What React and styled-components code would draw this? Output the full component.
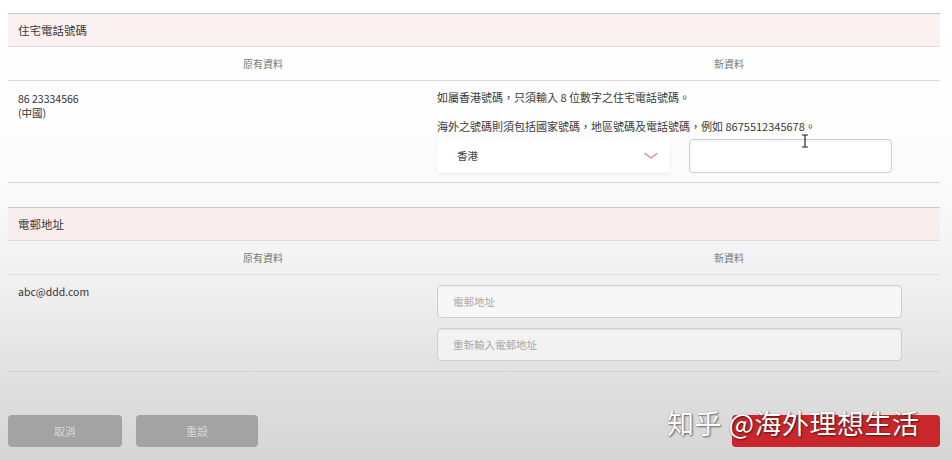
import React from 'react';
import styled, { createGlobalStyle } from 'styled-components';

const GlobalStyle = createGlobalStyle`
  html, body {
    margin: 0;
    padding: 0;
  }
  body {
    width: 952px;
    height: 460px;
    overflow: hidden;
    font-family: "Noto Sans CJK TC", "Liberation Sans", sans-serif;
    background: linear-gradient(180deg, #ffffff 0%, #fbfbfb 40%, #eeeeee 65%, #dedede 85%, #d6d6d6 100%);
    color: #333;
  }
`;

const Page = styled.div`
  position: relative;
  padding: 13px 12px 0 8px;
  height: 447px;
  display: flex;
  flex-direction: column;
`;

const Section = styled.section`
  border-top: 1px solid #c8c8c8;
  margin-bottom: ${(p) => p.$gap || 0}px;
`;

const SectionHead = styled.div`
  height: 32px;
  display: flex;
  align-items: center;
  padding-left: 10px;
  background: rgba(250, 232, 232, 0.6);
  border-bottom: 1px solid #dcdcdc;
  font-size: 11.5px;
  color: #3a3a3a;
`;

const ColHead = styled.div`
  height: 33px;
  display: grid;
  grid-template-columns: 510px 1fr;
  align-items: center;
  border-bottom: 1px solid #dcdcdc;
  font-size: 10px;
  color: #777;
  text-align: center;
`;

const DataRow = styled.div`
  display: grid;
  grid-template-columns: 429px 1fr;
  height: ${(p) => p.$h}px;
  border-bottom: 1px solid #d4d4d4;
  box-sizing: border-box;
  padding-top: ${(p) => p.$pt}px;
`;

const OldValue = styled.div`
  padding-left: 10px;
  padding-top: ${(p) => p.$pt || 0}px;
  font-size: 10.5px;
  line-height: 14px;
  color: #333;
`;

const NewCol = styled.div`
  display: flex;
  flex-direction: column;
`;

const Note = styled.p`
  margin: 0 0 ${(p) => p.$mb}px;
  font-size: 11px;
  line-height: 14px;
  color: #3a3a3a;
`;

const PhoneLine = styled.div`
  display: flex;
  align-items: center;
  gap: 19px;
  margin-top: 5px;
`;

const Select = styled.div`
  width: 233px;
  height: 35px;
  box-sizing: border-box;
  display: flex;
  align-items: center;
  justify-content: space-between;
  padding: 0 12px 0 20px;
  background: #fff;
  border-radius: 3px;
  box-shadow: 0 1px 3px rgba(0, 0, 0, 0.08);
  font-size: 10.5px;
  color: #444;
`;

const TextBox = styled.div`
  position: relative;
  width: ${(p) => p.$w}px;
  height: ${(p) => p.$h}px;
  box-sizing: border-box;
  border: 1.5px solid #cfcfcf;
  border-radius: 4px;
  background: ${(p) => p.$bg || '#fff'};
  box-shadow: inset 0 1px 2px rgba(0, 0, 0, 0.06);
  display: flex;
  align-items: center;
  padding-left: 15px;
  font-size: 10.5px;
  color: #a8a8a8;
  margin-bottom: ${(p) => p.$mb || 0}px;
`;

const Cursor = styled.svg`
  position: absolute;
  left: 111px;
  top: -6px;
`;

const Buttons = styled.div`
  margin-top: 43px;
  display: flex;
  align-items: center;
  gap: 14px;
`;

const Btn = styled.button`
  width: ${(p) => p.$w}px;
  height: 32px;
  border: none;
  border-radius: 4px;
  background: ${(p) => (p.$red ? '#c9272b' : '#a3a3a3')};
  color: #d8d8d8;
  font-family: inherit;
  font-size: 11px;
  margin-left: ${(p) => p.$ml || 0}px;
`;

const Watermark = styled.div`
  position: absolute;
  left: 667px;
  top: 403px;
  font-size: 27px;
  color: #fff;
  letter-spacing: 0.5px;
  text-shadow: 1px 1px 2px rgba(0, 0, 0, 0.55), 0 0 1px rgba(0, 0, 0, 0.4);
  font-family: "Noto Sans CJK SC", sans-serif;
`;

const Chevron = () => (
  <svg width="14" height="8" viewBox="0 0 14 8">
    <path d="M1 1.5 L7 6 L13 1.5" fill="none" stroke="#d9a3a3" strokeWidth="1.6" strokeLinecap="round" />
  </svg>
);

export default function App() {
  return (
    <>
      <GlobalStyle />
      <Page>
        <Section $gap={24}>
          <SectionHead>住宅電話號碼</SectionHead>
          <ColHead>
            <span>原有資料</span>
            <span>新資料</span>
          </ColHead>
          <DataRow $h={102} $pt={9}>
            <OldValue $pt={2}>
              86 23334566
              <br />
              (中國)
            </OldValue>
            <NewCol>
              <Note $mb={15}>如屬香港號碼，只須輸入 8 位數字之住宅電話號碼。</Note>
              <Note $mb={0}>海外之號碼則須包括國家號碼，地區號碼及電話號碼，例如 8675512345678。</Note>
              <PhoneLine>
                <Select>
                  香港
                  <Chevron />
                </Select>
                <TextBox $w={203} $h={34}>
                  <Cursor width="8" height="14" viewBox="0 0 8 14">
                    <path d="M1 1 H7 M4 1 V13 M1 13 H7" stroke="#222" strokeWidth="1.2" fill="none" />
                  </Cursor>
                </TextBox>
              </PhoneLine>
            </NewCol>
          </DataRow>
        </Section>

        <Section>
          <SectionHead>電郵地址</SectionHead>
          <ColHead>
            <span>原有資料</span>
            <span>新資料</span>
          </ColHead>
          <DataRow $h={97} $pt={10}>
            <OldValue>abc@ddd.com</OldValue>
            <NewCol>
              <TextBox $w={465} $h={33} $mb={10} $bg="#f7f7f7">電郵地址</TextBox>
              <TextBox $w={465} $h={33} $bg="#f2f2f2">重新輸入電郵地址</TextBox>
            </NewCol>
          </DataRow>
        </Section>

        <Buttons>
          <Btn $w={114}>取消</Btn>
          <Btn $w={123}>重設</Btn>
          <Btn $w={208} $red $ml={460} />
        </Buttons>
        <Watermark>知乎 @海外理想生活</Watermark>
      </Page>
    </>
  );
}
